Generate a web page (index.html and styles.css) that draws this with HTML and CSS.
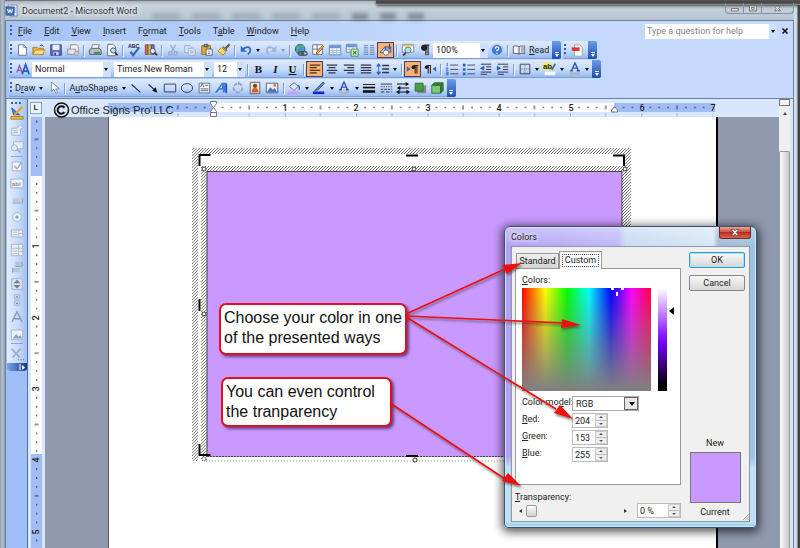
FILE: index.html
```html
<!DOCTYPE html>
<html lang="en">
<head>
<meta charset="utf-8">
<title>Document2 - Microsoft Word</title>
<link rel="stylesheet" href="styles.css">
</head>
<body>
<div class="window">
  <header class="titlebar">
    <svg class="word-icon" viewBox="0 0 14 14"><path d="M3 1h9v11H5z" fill="#fff" stroke="#6c86b8"/><path d="M9 4h2M9 6h2M9 8h2" stroke="#7a94c8"/><rect x="1" y="3" width="8" height="8" fill="#4a78c8" stroke="#2a4f9c"/><path d="M2.500 5l1.200 4L5 5.500 6.300 9l1.200-4" fill="none" stroke="#fff"/></svg>
    <h1>Document2 - Microsoft Word</h1>
    <div class="ghost" aria-hidden="true"><i></i><i></i><i></i><i></i><i></i><i></i><i></i><i></i></div>
    <div class="behind"></div>
    <div class="caption-buttons">
      <button aria-label="Minimize"><svg viewBox="0 0 18 12"><rect x="5.500" y="6.500" width="8" height="3" fill="#eee" stroke="#666"/></svg></button>
      <button aria-label="Restore"><svg viewBox="0 0 18 12"><rect x="5.500" y="3.500" width="8" height="6" fill="#eee" stroke="#666"/><rect x="8" y="5.500" width="3" height="2" fill="none" stroke="#666"/></svg></button>
      <button class="wide" aria-label="Close"><svg viewBox="0 0 30 12"><path d="M11.500 3.500h2l1.500 1.500 1.500-1.500h2l-2 3 2 3h-2L15 8l-1.500 1.500h-2l2-3z" fill="#eee" stroke="#666"/></svg></button>
    </div>
  </header>

  <div class="app">
    <nav class="menu">
      <span class="grip"></span>
      <a href="#"><u>F</u>ile</a><a href="#"><u>E</u>dit</a><a href="#"><u>V</u>iew</a><a href="#"><u>I</u>nsert</a><a href="#">F<u>o</u>rmat</a><a href="#"><u>T</u>ools</a><a href="#">T<u>a</u>ble</a><a href="#"><u>W</u>indow</a><a href="#"><u>H</u>elp</a>
      <div class="ask"><input type="text" placeholder="Type a question for help" aria-label="Type a question for help"><button class="drop" aria-label="Show questions"></button></div>
      <button class="close-doc" aria-label="Close document"><svg viewBox="0 0 8 8"><path d="M1.500 1.500l5 5M6.500 1.500l-5 5" stroke="#111" stroke-width="1.600"/></svg></button>
    </nav>

    <div class="bars">
      <div class="bar-row">
        <div class="bar">
          <span class="grip"></span>
          <button aria-label="New"><svg viewBox="0 0 16 16"><path d="M4 2h6l3 3v9H4z" fill="#fff" stroke="#5d6f94"/><path d="M10 2v3h3" fill="none" stroke="#5d6f94"/></svg></button>
          <button aria-label="Open"><svg viewBox="0 0 16 16"><path d="M1 5h5l1 1h6v7H1z" fill="#e8b64a" stroke="#a87820"/><path d="M4 8h11l-3 5H1z" fill="#ffdf80" stroke="#b88828"/><path d="M9 3q3-2 4 1" fill="none" stroke="#333"/></svg></button>
          <button aria-label="Save"><svg viewBox="0 0 16 16"><path d="M2 2h12v12H2z" fill="#5b68c8" stroke="#333c8c"/><path d="M4 2h8v6H4z" fill="#eef2ff"/><path d="M5 10h6v4H5z" fill="#c8cce8"/><path d="M6 11h2v3H6z" fill="#333c8c"/></svg></button>
          <button aria-label="Permission"><svg viewBox="0 0 16 16"><path d="M5 2h7l2 2v6H5z" fill="#f6f6f8" stroke="#888"/><path d="M2 7h9v6H2z" fill="#e4e4ea" stroke="#888"/><circle cx="12" cy="12" r="2.500" fill="#ccc" stroke="#999"/></svg></button>
          <span class="sep"></span>
          <button aria-label="Print"><svg viewBox="0 0 16 16"><path d="M5 2h8l-2 5H4z" fill="#fff" stroke="#777"/><path d="M1.500 8L4 6h9l2 2v5H2z" fill="#b8bcc8" stroke="#555"/><path d="M7 10h7v3H7z" fill="#3a9a4a"/></svg></button>
          <button aria-label="Print preview"><svg viewBox="0 0 16 16"><path d="M3 1.500h6l3 3v10H3z" fill="#fff" stroke="#667"/><circle cx="9.500" cy="8.500" r="3" fill="#bfe0f0" stroke="#445"/><path d="M11.500 11l3 3" stroke="#333" stroke-width="2"/></svg></button>
          <span class="sep"></span>
          <button aria-label="Spelling"><svg viewBox="0 0 16 16"><text x="1" y="6" class="abc">ABC</text><path d="M4 10l3 4 7-9" fill="none" stroke="#3a66c0" stroke-width="2.400"/></svg></button>
          <button aria-label="Research"><svg viewBox="0 0 16 16"><path d="M1.500 2h3v11h-3z" fill="#d86a4a" stroke="#744"/><path d="M5 2h3v11H5z" fill="#f0c840" stroke="#875"/><path d="M8.500 2h3v11h-3z" fill="#8a70c8" stroke="#448"/><circle cx="10" cy="9" r="3" fill="#d8ecfa" stroke="#446"/><path d="M12 11l3 3" stroke="#333" stroke-width="2"/></svg></button>
          <span class="sep"></span>
          <button aria-label="Cut"><svg viewBox="0 0 16 16" fill="none" stroke="#9aa8c4" stroke-width="1.500"><path d="M5 2l5 8M11 2L6 10"/><circle cx="5" cy="12" r="2"/><circle cx="11" cy="12" r="2"/></svg></button>
          <button aria-label="Copy"><svg viewBox="0 0 16 16" fill="#dbe5f6" stroke="#9aa8c4"><path d="M2 3h6l2 2v6H2z"/><path d="M6 6h6l2 2v6H6z"/><path d="M8 9h4M8 11h4"/></svg></button>
          <button aria-label="Paste"><svg viewBox="0 0 16 16"><path d="M2 3h10v10H2z" fill="#e0a838" stroke="#8a6420"/><path d="M5 1.500h4v3H5z" fill="#888" stroke="#555"/><path d="M7 7h7v7H7z" fill="#fff" stroke="#557"/><path d="M9 10h3M9 12h3" stroke="#57a"/></svg></button>
          <button aria-label="Format painter"><svg viewBox="0 0 16 16"><path d="M14.500 1.500L9 7" stroke="#654" stroke-width="2.500"/><path d="M5 5l5 5-3 4-6-5z" fill="#f6dc58" stroke="#a88a20"/><path d="M6.500 4l5 5" stroke="#777" stroke-width="2"/></svg></button>
          <span class="sep"></span>
          <button aria-label="Undo"><svg viewBox="0 0 16 16"><path d="M4 7q8-5 9 1 0 3-3 5" fill="none" stroke="#3467c8" stroke-width="2"/><path d="M2 3v7h7z" fill="#3467c8"/></svg></button><button class="drop" aria-label="Undo list"></button>
          <button aria-label="Redo"><svg viewBox="0 0 16 16"><path d="M12 7q-8-5-9 1 0 3 3 5" fill="none" stroke="#a3b3d0" stroke-width="2"/><path d="M14 3v7H7z" fill="#a3b3d0"/></svg></button><button class="drop dim" aria-label="Redo list"></button>
          <span class="sep"></span>
          <button aria-label="Insert hyperlink"><svg viewBox="0 0 16 16"><circle cx="7" cy="7" r="5.500" fill="#4a94d0" stroke="#24589a"/><path d="M4 3q3 0 3 3-3 1-4 4Q1 6 4 3M8 2q3 0 4 4-3 0-4-4" fill="#56b058"/><rect x="5" y="10" width="6" height="4" rx="2" fill="none" stroke="#555" stroke-width="1.500"/><rect x="9" y="10" width="6" height="4" rx="2" fill="none" stroke="#555" stroke-width="1.500"/></svg></button>
          <button aria-label="Tables and borders"><svg viewBox="0 0 16 16"><path d="M2 2h11v11H2zM2 7h11M7 2v11" fill="#fff" stroke="#667"/><path d="M14.500 4L8 12l-2 1 .500-2.500L13 3z" fill="#f0b848" stroke="#96641c"/></svg></button>
          <button aria-label="Insert table"><svg viewBox="0 0 16 16"><path d="M1.500 2.500h13v11h-13z" fill="#fff" stroke="#5878b0"/><path d="M2 3h12v3H2z" fill="#6a94dc"/><path d="M5.500 6v7M10 6v7M2 8.500h12M2 11h12" stroke="#9ab0d8"/></svg></button>
          <button aria-label="Insert worksheet"><svg viewBox="0 0 16 16"><path d="M1.500 1.500h12v9h-12z" fill="#fff" stroke="#5878b0"/><path d="M2 2h11v3H2z" fill="#6a94dc"/><path d="M5 5v5M9 5v5M2 7.500h11" stroke="#9ab0d8"/><path d="M7 7h8v8H7z" fill="#e8f6e4" stroke="#3a8a3a"/><path d="M9 9l4 4M13 9l-4 4" stroke="#2d8a34" stroke-width="1.500"/></svg></button>
          <button aria-label="Columns"><svg viewBox="0 0 16 16"><path d="M2 3h5M2 5.500h5M2 8h5M2 10.500h5M2 13h5M9 3h5M9 5.500h5M9 8h5M9 10.500h5M9 13h5" stroke="#5878b0"/></svg></button>
          <button class="on" aria-label="Drawing"><svg viewBox="0 0 16 16"><path d="M1 11l6-7v7z" fill="#bcd0f4" stroke="#46568c"/><rect x="7.500" y="4.500" width="6" height="6" fill="#8ca4dc" stroke="#46568c"/><circle cx="8" cy="11" r="3" fill="#fff" stroke="#667"/><path d="M12 1v6" stroke="#555" stroke-width="1.500"/></svg></button>
          <span class="sep"></span>
          <button aria-label="Document map"><svg viewBox="0 0 16 16"><path d="M1.500 1.500h13v9h-13z" fill="#fff" stroke="#7080a8"/><path d="M2 2h12v2H2z" fill="#e8c060"/><circle cx="8" cy="8" r="3.500" fill="#aee0ec" stroke="#476"/><path d="M5.500 11l-3 3.500" stroke="#444" stroke-width="2"/></svg></button>
          <button class="glyph" aria-label="Show formatting marks"><svg viewBox="0 0 16 16"><path d="M13 2.500H7.500M9 2v12M11.500 2v12" stroke="#222" stroke-width="1.300"/><circle cx="7" cy="5.500" r="3.500" fill="#222"/></svg></button>
          <span class="combo zoom"><select aria-label="Zoom"><option>100%</option></select></span>
          <button aria-label="Help"><svg viewBox="0 0 16 16"><circle cx="8" cy="8" r="6.500" fill="#3a78dc" stroke="#b6c8e8" stroke-width="1.500"/><path d="M6 6.500q0-2 2-2t2 2q0 1-2 2v1M8 11v1.300" fill="none" stroke="#fff" stroke-width="1.500"/></svg></button>
          <span class="sep"></span>
          <button class="label"><svg viewBox="0 0 16 16"><path d="M1.500 3.500H7L8 4.500 9 3.500h5.500V12H9l-1 1-1-1H1.500z" fill="#f6f8fc" stroke="#556"/><path d="M8 4v9" stroke="#333"/><path d="M10 4h4v7h-4z" fill="#aab2c4"/></svg><span><u>R</u>ead</span></button>
          <span class="cap"></span>
        </div>
        <div class="bar">
          <span class="grip"></span>
          <button class="pdf" aria-label="Convert to PDF"><svg viewBox="0 0 16 16"><path d="M5 2h6l3 3v10H5z" fill="#fff" stroke="#999"/><path d="M2 5h9v4H2z" fill="#e03028"/></svg></button>
          <span class="cap"></span>
        </div>
      </div>

      <div class="bar-row">
        <div class="bar">
          <span class="grip"></span>
          <button class="styles" aria-label="Styles and formatting"><svg viewBox="0 0 16 16"><path d="M1 12l3-8 3 8M2 9.500h4" fill="none" stroke="#8a5ab0" stroke-width="1.500"/><path d="M7 14l4-11 4 11M8.500 10.500h5" fill="none" stroke="#2e5cb8" stroke-width="2"/></svg></button>
          <span class="combo style"><select aria-label="Style"><option>Normal</option></select></span>
          <span class="combo font"><select aria-label="Font"><option>Times New Roman</option></select></span>
          <span class="combo size"><select aria-label="Font size"><option>12</option></select></span>
          <span class="sep"></span>
          <button class="glyph" aria-label="Bold"><b>B</b></button>
          <button class="glyph" aria-label="Italic"><b><em>I</em></b></button>
          <button class="glyph" aria-label="Underline"><b><u>U</u></b></button>
          <span class="sep"></span>
          <button class="on" aria-label="Align left"><svg viewBox="0 0 16 16"><path d="M2 3.500h12M2 6.500h8M2 9.500h12M2 12.500h8" stroke="#432" stroke-width="1.500"/></svg></button>
          <button aria-label="Center"><svg viewBox="0 0 16 16"><path d="M2 3.500h12M4 6.500h8M2 9.500h12M4 12.500h8" stroke="#334" stroke-width="1.500"/></svg></button>
          <button aria-label="Align right"><svg viewBox="0 0 16 16"><path d="M2 3.500h12M6 6.500h8M2 9.500h12M6 12.500h8" stroke="#334" stroke-width="1.500"/></svg></button>
          <button aria-label="Justify"><svg viewBox="0 0 16 16"><path d="M2 3.500h12M2 6.500h12M2 9.500h12M2 12.500h12" stroke="#334" stroke-width="1.500"/></svg></button>
          <button aria-label="Line spacing"><svg viewBox="0 0 16 16"><path d="M7 4h8M7 8h8M7 12h8" stroke="#334" stroke-width="1.500"/><path d="M3 3v10" stroke="#3060c0"/><path d="M0 5l3-4 3 4zM0 11l3 4 3-4z" fill="#3060c0"/></svg></button><button class="drop" aria-label="Line spacing list"></button>
          <span class="sep"></span>
          <button class="on" aria-label="Left to right"><svg viewBox="0 0 16 16"><path d="M1 5v6l4-3z" fill="#3060c0"/><path d="M14 4H9M10.500 4v9M12.500 4v9" fill="none" stroke="#222" stroke-width="1.200"/><circle cx="8.500" cy="6" r="2.200" fill="#222"/></svg></button>
          <button aria-label="Right to left"><svg viewBox="0 0 16 16"><path d="M15 5v6l-4-3z" fill="#3060c0"/><path d="M9 4H4M6 4v9M8.500 4v9" fill="none" stroke="#222" stroke-width="1.200"/><circle cx="4" cy="6" r="2" fill="#222"/></svg></button>
          <span class="sep"></span>
          <button aria-label="Numbering"><svg viewBox="0 0 16 16"><path d="M2.500 1v4M1 7h2.500L1.500 9.500H4M1 11.500h2.500v3H1M1 13h2" fill="none" stroke="#3060c0"/><path d="M6 3.500h9M6 8.500h9M6 13.500h9" stroke="#445"/></svg></button>
          <button aria-label="Bullets"><svg viewBox="0 0 16 16"><path d="M1 2h3v3H1zM1 7h3v3H1zM1 12h3v3H1z" fill="#3060c0"/><path d="M6 3.500h9M6 8.500h9M6 13.500h9" stroke="#445"/></svg></button>
          <button aria-label="Decrease indent"><svg viewBox="0 0 16 16"><path d="M2 2.500h12M8 5.500h6M8 8.500h6M2 11.500h12M2 14h7" stroke="#223"/><path d="M6 4v6L1 7z" fill="#3060c0"/></svg></button>
          <button aria-label="Increase indent"><svg viewBox="0 0 16 16"><path d="M2 2.500h12M8 5.500h6M8 8.500h6M2 11.500h12M2 14h7" stroke="#223"/><path d="M1 4v6l5-3z" fill="#3060c0"/></svg></button>
          <span class="sep"></span>
          <button aria-label="Borders"><svg viewBox="0 0 16 16"><path d="M2.500 2.500h11v11h-11z" fill="none" stroke="#334"/><path d="M8 3v10M3 8h10" stroke="#667" stroke-dasharray="1 1"/></svg></button><button class="drop" aria-label="Borders list"></button>
          <button aria-label="Highlight"><svg viewBox="0 0 16 16"><path d="M0 1h9v8H0z" fill="#f4ee50"/><text x="0" y="8" class="ab">ab</text><path d="M14 2l-4 7" stroke="#567" stroke-width="2"/><path d="M2 11h12v4H2z" fill="#fff"/></svg></button><button class="drop" aria-label="Highlight list"></button>
          <button aria-label="Font color"><svg viewBox="0 0 16 16"><path d="M4 10l4-9 4 9M5 7h6M2.500 10h3M10 10h3.500" fill="none" stroke="#3458a8" stroke-width="1.500"/><path d="M2 12h12v3H2z" fill="#b0b4c0"/></svg></button><button class="drop" aria-label="Font color list"></button>
          <span class="cap"></span>
        </div>
      </div>

      <div class="bar-row">
        <div class="bar">
          <span class="grip"></span>
          <button class="label"><span>D<u>r</u>aw</span></button><button class="drop" aria-label="Draw menu"></button>
          <button aria-label="Select objects"><svg viewBox="0 0 16 16"><path d="M5 1v11l3-2.500L10 14l2-1-2-4h4z" fill="#fff" stroke="#7888a8"/></svg></button>
          <span class="sep"></span>
          <button class="label"><span>A<u>u</u>toShapes</span></button><button class="drop" aria-label="AutoShapes menu"></button>
          <button aria-label="Line"><svg viewBox="0 0 16 16"><path d="M3 4l10 9" stroke="#223" stroke-width="1.200"/></svg></button>
          <button aria-label="Arrow"><svg viewBox="0 0 16 16"><path d="M3 4l8 7" stroke="#223" stroke-width="1.200"/><path d="M13 13.500L7 11l4-4z" fill="#111"/></svg></button>
          <button aria-label="Rectangle"><svg viewBox="0 0 16 16"><path d="M1.500 3.500h13v9h-13z" fill="none" stroke="#334"/></svg></button>
          <button aria-label="Oval"><svg viewBox="0 0 16 16"><ellipse cx="8" cy="8" rx="6.500" ry="5" fill="none" stroke="#334"/></svg></button>
          <button aria-label="Text box"><svg viewBox="0 0 16 16"><path d="M2.500 2.500h12v11h-12z" fill="#f6f8fd" stroke="#667"/><path d="M4 7l2-4 2 4M9 5h4M4 9h9M4 11h9" fill="none" stroke="#557"/></svg></button>
          <button aria-label="WordArt"><svg viewBox="0 0 16 16"><path d="M1 13L9 2h4v11h-3v-3H6l-2 3z" fill="#3f7fd8"/><path d="M9 5L7 8h2z" fill="#fff"/><path d="M13 2l2 1v11l-2-1" fill="#24509c"/></svg></button>
          <button aria-label="Diagram"><svg viewBox="0 0 16 16"><circle cx="8" cy="8" r="5" fill="none" stroke="#94a2bc" stroke-width="2" stroke-dasharray="4 2"/><path d="M8 0v5l3-2.500z" fill="#94a2bc"/></svg></button>
          <button aria-label="Clip art"><svg viewBox="0 0 16 16"><path d="M2.500 1.500h11v13h-11z" fill="#f4e8c8" stroke="#556"/><circle cx="8" cy="5.500" r="2.500" fill="#7a4a24"/><path d="M4 13q0-5 4-5t4 5z" fill="#d85c34"/></svg></button>
          <button aria-label="Picture"><svg viewBox="0 0 16 16"><path d="M1.500 2.500h13v11h-13z" fill="#e8f2fc" stroke="#557"/><path d="M2 13l4-6 3 3 2-2 3 5z" fill="#4a78b0"/><circle cx="11" cy="5" r="1.500" fill="#d86a30"/></svg></button>
          <span class="sep"></span>
          <button aria-label="Fill color"><svg viewBox="0 0 16 16"><path d="M3 6l5-4 5 4-5 5z" fill="#e4ecf8" stroke="#44608c"/><path d="M12 5q3 1 2 5" fill="none" stroke="#3468b8" stroke-width="1.500"/><path d="M1 12h13v3H1z" fill="#c99aff"/></svg></button><button class="drop" aria-label="Fill colors"></button>
          <button aria-label="Line color"><svg viewBox="0 0 16 16"><path d="M13 1L6 8l-3 3 4-1 7-7z" fill="#5a90d8" stroke="#345"/><path d="M1 12h13v3H1z" fill="#1020e0"/></svg></button><button class="drop" aria-label="Line colors"></button>
          <button aria-label="Text color"><svg viewBox="0 0 16 16"><path d="M4 10l4-9 4 9M5 7h6M2.500 10h3M10 10h3.500" fill="none" stroke="#3458a8" stroke-width="1.500"/><path d="M2 12h12v3H2z" fill="#b0b4c0"/></svg></button><button class="drop" aria-label="Text colors"></button>
          <button aria-label="Line style"><svg viewBox="0 0 16 16"><path d="M1 4h14" stroke="#111"/><path d="M1 7.500h14" stroke="#111" stroke-width="2"/><path d="M1 12h14" stroke="#111" stroke-width="3"/></svg></button>
          <button aria-label="Dash style"><svg viewBox="0 0 16 16" stroke="#223"><path d="M2 3.500h13"/><path d="M2 6.500h13" stroke-dasharray="1 1"/><path d="M2 9.500h13" stroke-dasharray="3 1"/><path d="M2 12.500h13" stroke-dasharray="4 2"/></svg></button>
          <button aria-label="Arrow style"><svg viewBox="0 0 16 16"><path d="M1 3.500h12M3 8h12M2 12.500h12" stroke="#111" stroke-width="1.200"/><path d="M11 1l4 2.500L11 6zM5 5.500L1 8l4 2.500zM12 10l4 2.500-4 2.500zM4 10L0 12.500 4 15z" fill="#111"/></svg></button>
          <button aria-label="Shadow style"><svg viewBox="0 0 16 16"><path d="M5 5h10v9H5z" fill="#888"/><path d="M2.500 2.500h9v9h-9z" fill="#44a044" stroke="#2c6c30"/></svg></button>
          <button aria-label="3-D style"><svg viewBox="0 0 16 16"><path d="M2 5l3-3h10v9l-3 3" fill="#2f7a36" stroke="#2c6c30"/><path d="M2 5h10v9H2z" fill="#7cc878" stroke="#2c6c30"/></svg></button>
          <span class="cap"></span>
        </div>
      </div>
    </div>

    <div class="workspace">
      <aside class="side">
        <div class="toolbox">
          <span class="grip flat"></span>
          <button aria-label="Design mode"><svg viewBox="0 0 16 16"><path d="M2 2l2 8h7z" fill="#3a80e0" stroke="#2454a0"/><path d="M14 1L5 10" stroke="#f0a020" stroke-width="2.500"/><path d="M1 12h14v3H1z" fill="#f0c040" stroke="#a07818"/></svg></button>
          <button aria-label="Properties"><svg viewBox="0 0 16 16" fill="#e6ecf6" stroke="#a0aec6"><path d="M2 6h10v8H2z"/><path d="M7 6l5-4 3 3-4 3M4 9h5M4 11h5"/></svg></button>
          <button aria-label="View code"><svg viewBox="0 0 16 16" fill="#e6ecf6" stroke="#a0aec6"><path d="M4 2h11v8H4z"/><circle cx="5" cy="9" r="3.500"/><path d="M8 11l4 3" stroke-width="2"/></svg></button>
          <span class="rule"></span>
          <button aria-label="Check box"><svg viewBox="0 0 16 16" fill="#f2f5fa" stroke="#9aa8c0"><path d="M2.500 3.500h11v10h-11z"/><path d="M5 8l3 3 5-7" fill="none" stroke-width="1.500"/></svg></button>
          <button aria-label="Text box control"><svg viewBox="0 0 16 16"><path d="M1 3.500h14v10H1z" fill="#f2f5fa" stroke="#9aa8c0"/><text x="2" y="11" class="abi">abl</text></svg></button>
          <button aria-label="Command button"><svg viewBox="0 0 16 16"><path d="M3 6h11v5H3z" fill="#c0cad8"/><path d="M3 11.500h11.500V6" fill="none" stroke="#909eb8"/></svg></button>
          <button aria-label="Option button"><svg viewBox="0 0 16 16"><circle cx="8" cy="8" r="5" fill="#eef2f8" stroke="#a0aec6"/><circle cx="8" cy="8" r="2" fill="#93a1ba"/></svg></button>
          <button aria-label="List box"><svg viewBox="0 0 16 16" fill="#eef2f8" stroke="#a0aec6"><path d="M1.500 4.500h13v8h-13zM10 5v7M3 7h5M3 10h5M10 8.500h4"/></svg></button>
          <button aria-label="Combo box"><svg viewBox="0 0 16 16" fill="#eef2f8" stroke="#a0aec6"><path d="M1.500 1.500h13v13h-13zM9.500 2v12M2 6h12M3 9h5M3 12h5M11 10h3"/></svg></button>
          <button aria-label="Toggle button"><svg viewBox="0 0 16 16"><path d="M6 2h8v5H6zM3 9h8v5H3z" fill="#b8c4d6"/><path d="M6 7.500h8V2M3 9v5.500" fill="none" stroke="#8d9bb4"/></svg></button>
          <button aria-label="Spin button"><svg viewBox="0 0 16 16"><path d="M2 2h12v12H2z" fill="#dbe2ee" stroke="#a0aec6"/><path d="M4 7l4-4 4 4zM4 9l4 4 4-4z" fill="#6d7d9c"/></svg></button>
          <button aria-label="Scroll bar"><svg viewBox="0 0 16 16"><path d="M5 2h6v5H5zM5 9h6v5H5z" fill="#dbe2ee" stroke="#a0aec6"/><path d="M6 5l2-2 2 2zM6 11l2 2 2-2z" fill="#6d7d9c"/></svg></button>
          <button aria-label="Label"><svg viewBox="0 0 16 16"><path d="M2 14L8 2l6 12M4.500 10h7" fill="none" stroke="#8998b4" stroke-width="1.500"/></svg></button>
          <button aria-label="Image"><svg viewBox="0 0 16 16"><path d="M1.500 3.500h13v11h-13z" fill="#edf1f8" stroke="#a0aec6"/><path d="M3 13l4-5 3 3 2-2 2 4z" fill="#94a3bd"/></svg></button>
          <span class="rule"></span>
          <button aria-label="More controls"><svg viewBox="0 0 16 16"><path d="M2 2l9 10M12 2L3 12" stroke="#9dabc4" stroke-width="2"/><path d="M9 14.500h1M12 14.500h1M15 14.500h1" stroke="#446"/></svg></button>
          <span class="side-cap"><svg viewBox="0 0 6 6"><path d="M1 0v6" stroke="#fff"/><path d="M3 1v5l3-2.500z" fill="#fff"/></svg></span>
        </div>
      </aside>

      <main class="editor">
        <div class="top-ruler">
          <button class="tab-stop" aria-label="Tab stop">L</button>
          <svg class="h-ruler" aria-hidden="true">
            <defs>
              <pattern id="ht" patternUnits="userSpaceOnUse" x="213.500" y="100" width="71.300" height="17">
                <path d="M8.400 7.500h1.200M17.300 7.500h1.200M26.200 7.500h1.200M44 7.500h1.200M52.900 7.500h1.200M61.800 7.500h1.200" stroke="#333" stroke-width="1.300"/>
                <path d="M35.700 5.500v4" stroke="#333"/><path d="M35.700 13.500v3M.500 13.500v3" stroke="#9aaccc"/>
              </pattern>
            </defs>
            <g transform="translate(-45 -100)">
              <rect x="108" y="103" width="607" height="9" fill="#a0bdf6"/>
              <rect x="213" y="103" width="401" height="9" fill="#fff"/>
              <rect x="108" y="100" width="605" height="17" fill="url(#ht)"/>
              <g class="numbers"><text x="285" y="111">1</text><text x="356" y="111">2</text><text x="428" y="111">3</text><text x="499" y="111">4</text><text x="571" y="111">5</text><text x="642" y="111">6</text><text x="713" y="111">7</text></g>
              <path d="M210.500 101.500h6v2l-3 4-3-4zM210.500 111.500l3-4 3 4v5h-6zM210.500 112.500h6M611.500 112v-2l3-3 3 3v2z" fill="#fff" stroke="#777"/>
            </g>
          </svg>
          <div class="watermark"><svg viewBox="0 0 16 16"><circle cx="8" cy="8" r="7" fill="none" stroke="#111" stroke-width="1.500"/><path d="M11 5.800a3.800 3.800 0 100 4.400" fill="none" stroke="#111" stroke-width="2"/></svg>Office Signs Pro LLC</div>
        </div>

        <div class="left-ruler">
          <svg class="v-ruler" aria-hidden="true">
            <defs>
              <pattern id="vt" patternUnits="userSpaceOnUse" x="31" y="175" width="11" height="71.300">
                <path d="M5 8.900h1.300M5 17.800h1.300M5 26.700h1.300M5 44.500h1.300M5 53.400h1.300M5 62.300h1.300" stroke="#333" stroke-width="1.300"/><path d="M3.500 35.600h4" stroke="#333"/>
              </pattern>
            </defs>
            <g transform="translate(-31 -117)">
              <rect x="31" y="117" width="11" height="2000" fill="#a0bdf6"/>
              <rect x="31" y="176" width="11" height="278" fill="#fff"/>
              <rect x="31" y="119" width="11" height="2000" fill="url(#vt)"/>
              <g class="numbers"><text transform="translate(39 246) rotate(-90)">1</text><text transform="translate(39 318) rotate(-90)">2</text><text transform="translate(39 389) rotate(-90)">3</text><text transform="translate(39 460) rotate(-90)">4</text><text transform="translate(39 532) rotate(-90)">5</text></g>
            </g>
          </svg>
        </div>

        <div class="desk">
          <div class="page">
            <svg class="drawing" viewBox="192 148 446 320" aria-hidden="true">
              <defs>
                <pattern id="hatch" patternUnits="userSpaceOnUse" width="3" height="3"><path d="M-1 1L1-1M0 3L3 0M2 4L4 2" stroke="#555" stroke-width=".8"/></pattern>
              </defs>
              <path d="M192 148h439v313H192zM198 154v307h427V154z" fill="url(#hatch)" fill-rule="evenodd"/>
              <path d="M201 166h426v295H201zM207 172v289h415V172z" fill="url(#hatch)" fill-rule="evenodd"/>
              <rect x="207" y="457" width="431" height="8" fill="#fff"/>
              <rect x="207" y="172" width="415" height="285" fill="#c999ff"/>
              <path d="M207 457V171.500h415V457" fill="none" stroke="#444"/>
              <path d="M207 456.500h415" stroke="#444" stroke-dasharray="2 1"/><path d="M206 461h420" stroke="#999" stroke-dasharray="1 2"/>
              <path d="M199.500 166v-11h11M406 155.500h12M613 155.500h11V166M199.500 299v12M199.500 444v11h11M406 456h12" fill="none" stroke="#000" stroke-width="2"/>
              <g fill="#fff" stroke="#333"><circle cx="204" cy="169" r="2"/><circle cx="414" cy="169" r="2"/><circle cx="625" cy="169" r="2"/><circle cx="204" cy="314" r="2"/><circle cx="204" cy="459" r="2" stroke-dasharray="1 1"/><circle cx="415" cy="460" r="2"/></g>
            </svg>
            <p class="callout first">Choose your color in one<br>of the presented ways</p>
            <p class="callout second">You can even control<br>the tranparency</p>
          </div>
        </div>

        <div class="scroll">
          <span class="split"></span><button class="up" aria-label="Scroll up"></button><span class="thumb"></span>
        </div>
      </main>
    </div>
  </div>
</div>

<section class="dialog" role="dialog" aria-labelledby="dlg">
  <header><h2 id="dlg">Colors</h2><button aria-label="Close dialog"><svg viewBox="0 0 30 12"><path d="M10.500 2.500h3l1.500 1.500 1.500-1.500h3l-3 3.500 3 3.500h-3L15 8l-1.500 1.500h-3l3-3.500z" fill="#fff" stroke="#643"/></svg></button></header>
  <form class="content">
    <div class="main">
      <div class="tabs"><button type="button">Standard</button><button type="button" class="active"><span>Custom</span></button></div>
      <div class="panel">
        <div class="caption"><u>C</u>olors:</div>
        <div class="pickers">
          <div class="spectrum"><svg viewBox="0 0 26 8"><path d="M0 0h3v2H0zM10 0h3v2h-3zM5 4h2v4H5z" fill="#fff"/></svg></div>
          <div class="luminance"></div>
          <span class="pointer"></span>
        </div>
        <div class="field"><label for="model">Color mo<u>d</u>el:</label><span class="combo model"><select id="model"><option>RGB</option></select></span></div>
        <div class="field"><label for="r"><u>R</u>ed:</label><span class="spin"><input id="r" type="text" value="204"><i></i></span></div>
        <div class="field"><label for="g"><u>G</u>reen:</label><span class="spin"><input id="g" type="text" value="153"><i></i></span></div>
        <div class="field"><label for="b"><u>B</u>lue:</label><span class="spin"><input id="b" type="text" value="255"><i></i></span></div>
      </div>
      <label class="caption trans" for="t"><u>T</u>ransparency:</label>
      <div class="slide"><span class="left"></span><input id="t" type="range" min="0" max="100" value="0"><span class="right"></span><span class="spin wide"><input type="text" value="0 %" aria-label="Transparency percent"><i></i></span></div>
    </div>
    <div class="actions">
      <button type="button" class="default">OK</button>
      <button type="button">Cancel</button>
      <div class="preview"><span>New</span><div class="swatch"></div><span>Current</span></div>
    </div>
  </form>
  <svg class="resize" viewBox="0 0 10 10"><path d="M1 9l8-8M4 9l5-5M7 9l2-2" stroke="#999"/></svg>
</section>

<svg class="arrows" viewBox="0 0 800 548" aria-hidden="true">
  <defs><filter id="soft" x="-10%" y="-10%" width="120%" height="120%"><feDropShadow dx="1" dy="2" stdDeviation="1" flood-color="#333" flood-opacity=".6"/></filter></defs>
  <g stroke="#ec1010" stroke-width="1.700" fill="#f01010" filter="url(#soft)">
    <path d="M406 314L505 269M406 316l157 7M406 317l150 92M390 403l115 76" fill="none"/>
    <g stroke="none"><path d="M522 263l-15 11-5-9zM581 325l-20 3 1-9zM573 419l-19-6 6-8zM521 486l-19-5 6-8z"/></g>
  </g>
</svg>
</body>
</html>
```
FILE: styles.css
```css
* { box-sizing: border-box; }
body { margin: 0; font-family: Roboto, "Open Sans", sans-serif; font-size: 9px; line-height: 12px; color: #222; position: relative; overflow: hidden; }
button, input, select { font: inherit; color: inherit; margin: 0; padding: 0; border: 0; background: none; border-radius: 0; outline: 0; }
h1, h2, p { margin: 0; font-weight: 400; }
svg { display: block; }
a { color: inherit; text-decoration: none; }

.window { min-height: 100vh; display: flex; flex-direction: column; padding: 0 6px 0 5px; background: linear-gradient(to right, #8797a8 0, #b8c4d0 2px, #8c9aaa 5px, transparent 5px, transparent calc(100% - 7px), #dce9f4 calc(100% - 7px), #c4d4e4 calc(100% - 3px), #444 calc(100% - 2px)), #c6d2dc; }
.titlebar { height: 20px; display: flex; align-items: center; position: relative; gap: 3px; background: linear-gradient(#a8b4c0, #c8d2da 4px, #b7c5d3); border-top: 1px solid #777; }
.word-icon { width: 14px; height: 14px; }
h1 { font-size: 9px; color: #333; text-shadow: 0 0 4px #fff, 0 0 6px #fff; }
.ghost { display: flex; gap: 12px; align-self: flex-end; margin-left: 12px; filter: blur(2px); opacity: .4; }
.ghost i { width: 28px; height: 7px; background: #7c8c9a; }
.ghost i:nth-child(n+6) { width: 16px; background: #334; }
.behind { position: absolute; left: 371px; right: -6px; top: -1px; height: 5px; background: linear-gradient(#555, #444 3px, #999); box-shadow: 0 1px 3px #444; border-radius: 0 0 0 2px; }
.caption-buttons { position: absolute; right: 0; top: 2px; display: flex; border: 1px solid #8391a0; border-top: 0; border-radius: 0 0 4px 4px; }
.caption-buttons button { width: 18px; height: 10px; border-right: 1px solid #8391a0; }
.caption-buttons .wide { width: 31px; border: 0; }
.caption-buttons svg { width: 100%; height: 10px; }

.app { flex: 1; display: flex; flex-direction: column; border: 1px solid #6e7e94; border-bottom: 0; background: linear-gradient(to right, #a6c3f8, #c4d9fb 55%); }
.menu { height: 20px; display: flex; align-items: center; padding: 0 2px 0 4px; gap: 12px; }
.menu .grip { margin-right: -6px; }
.grip { width: 2px; height: 12px; margin: 0 1px 0 0; background: repeating-linear-gradient(#3b5f9c 0 2px, transparent 2px 4px); flex: none; }
.ask { margin-left: auto; display: flex; height: 15px; width: 132px; background: #fff; }
.ask input { flex: 1; min-width: 0; padding-left: 2px; }
.ask input::placeholder { color: #888; opacity: 1; }
.ask .drop { background: #cfe0fb; }
.close-doc { width: 10px; height: 10px; margin-left: -8px; }
.close-doc svg { width: 8px; height: 8px; }

.bars { display: flex; flex-direction: column; gap: 1px; padding: 0 0 1px 3px; }
.bar-row { display: flex; gap: 2px; }
.bar { height: 18px; display: flex; align-items: center; background: linear-gradient(#dfebfe, #c3d9fb 55%, #92b5ee); border-radius: 2px; box-shadow: inset 0 -1px #7d9fd8; }
.bar > .grip { margin-left: 1px; }
.bar button { width: 17px; height: 16px; display: flex; align-items: center; justify-content: center; flex: none; }
.bar button svg { width: 14px; height: 14px; }
.bar .drop, .ask .drop { width: 8px; height: 15px; display: flex; align-items: center; justify-content: center; flex: none; }
.drop::after { content: ""; border: 2px solid transparent; border-top: 3px solid #111; border-bottom: 0; }
.drop.dim::after { border-top-color: #8a9ab8; }
.bar .on { background: #fcb26a; border: 1px solid #4a3c78; }
.bar .label { width: auto; padding: 0 2px; gap: 3px; }
.bar .glyph { font: 11px/14px "Liberation Serif", serif; color: #111; }
.bar .styles { width: 19px; }
.bar .pdf { width: 20px; }
.sep { width: 1px; height: 11px; margin: 0 2px; background: #7c9cd4; box-shadow: 1px 1px #eef4ff; flex: none; }
.cap { width: 9px; height: 18px; margin-left: 1px; flex: none; border-radius: 0 2px 2px 0; background: linear-gradient(#6c9be8, #1e50b0); display: flex; flex-direction: column; align-items: center; justify-content: flex-end; gap: 1px; padding-bottom: 2px; }
.cap::before { content: ""; width: 4px; height: 1px; background: #fff; }
.cap::after { content: ""; border: 2px solid transparent; border-top: 3px solid #fff; border-bottom: 0; }
.combo { position: relative; height: 15px; background: #fff; display: flex; flex: none; }
.combo select { appearance: none; width: 100%; padding-left: 3px; }
.combo::after { content: ""; position: absolute; right: 3px; top: 6px; border: 2px solid transparent; border-top: 3px solid #111; border-bottom: 0; pointer-events: none; }
.combo::before { content: ""; position: absolute; right: 0; top: 0; bottom: 0; width: 8px; background: #cfe0fb; }
.style { width: 79px; margin-right: 3px; }
.font { width: 98px; margin-right: 2px; }
.size { width: 31px; }
.zoom { width: 55px; }
.abc { font: bold 6px "Liberation Sans", sans-serif; fill: #224; }
.ab { font: bold 9px "Liberation Sans", sans-serif; fill: #222; }
.abi { font: bold 7px "Liberation Sans", sans-serif; fill: #8090ac; }

.workspace { flex: 1; display: grid; grid-template-columns: 21px minmax(0, 1fr); border-top: 1px solid #7080a0; }
.side { background: #9fbdf6; padding-left: 1px; }
.toolbox { height: 272px; display: flex; flex-direction: column; justify-content: space-between; align-items: center; background: linear-gradient(to right, #e4eefe, #c3d9fb 60%, #a0c0f2); border-radius: 0 0 3px 3px; padding-top: 3px; }
.toolbox button { width: 16px; height: 15px; }
.toolbox button svg { width: 14px; height: 14px; margin: auto; }
.grip.flat { width: 12px; height: 2px; background: repeating-linear-gradient(to right, #3b5f9c 0 2px, transparent 2px 4px); }
.rule { width: 12px; height: 1px; background: #88a6d8; }
.side-cap { align-self: stretch; height: 8px; background: linear-gradient(to right, #7aa4ec, #123c8c); border-radius: 0 0 3px 3px; padding: 1px 2px; }
.side-cap svg { width: 6px; height: 6px; margin-left: auto; }
.editor { display: grid; grid-template-columns: 17px minmax(0, 1fr) 14px; grid-template-rows: 18px 1fr; border-left: 1px solid #60708c; background: #d8e7fd; }
.top-ruler { grid-column: 1 / 3; display: flex; position: relative; padding-top: 1px; }
.tab-stop { width: 12px; height: 12px; margin: 2px 3px 0 2px; border: 1px solid #8ba2c8; background: #eef4fe; font: bold 8px/8px "Liberation Sans", sans-serif; color: #333; }
.h-ruler { flex: 1; min-width: 0; height: 17px; }
.numbers { font: 500 9px Roboto, sans-serif; fill: #222; text-anchor: middle; }
.watermark { position: absolute; left: 25px; top: 3px; display: flex; align-items: center; gap: 1px; font: 11px/16px "Liberation Sans", sans-serif; color: #222; }
.watermark svg { width: 17px; height: 16px; }
.left-ruler { padding: 0 3px; }
.v-ruler { width: 11px; height: 100%; }
.desk { background: #9099ae; padding: 0 61px 0 63px; display: flex; }
.page { flex: 1; position: relative; background: #fff; border-left: 1px solid #555; border-right: 2px solid #000; }
.drawing { position: absolute; left: 83px; top: 31px; width: 446px; height: 320px; }
.callout { position: absolute; font: 16px/20px "Liberation Sans", sans-serif; color: #111; background: #fff; border: 2px solid #e01020; border-radius: 7px; box-shadow: 2px 2px 3px rgba(40, 0, 60, .6); white-space: nowrap; padding: 3px; }
.first { left: 110px; top: 186px; width: 188px; height: 52px; }
.second { left: 112px; top: 260px; width: 171px; height: 50px; }
.scroll { grid-column: 3; grid-row: 1 / 3; margin-right: 3px; background: #eeeff1; display: flex; flex-direction: column; align-items: stretch; }
.split { height: 7px; border: 1px solid #777; background: #f4f4f4; }
.up { height: 45px; display: flex; justify-content: center; align-items: flex-start; padding-top: 6px; }
.up::after { content: ""; border: 2px solid transparent; border-bottom: 3px solid #444; border-top: 0; }
.thumb { flex: 1; border: 1px solid #999; border-bottom: 0; border-radius: 2px 2px 0 0; background: linear-gradient(to right, #fafafa, #c9cbd2); }

.dialog { position: absolute; left: 504px; top: 226px; width: 253px; height: 302px; padding: 0 6px 6px; display: flex; flex-direction: column; border: 1px solid #44506c; border-radius: 6px 6px 4px 4px; background: linear-gradient(rgba(255,255,255,.35), transparent 20px), linear-gradient(transparent 230px, #bfe0f2 240px), linear-gradient(to right, #b3a0f4 0, #bdb6f8 45%, #c6daf2 48%, #d6e6f6 83%, #a4b8d4 85%, #9cc4e0); box-shadow: inset 0 0 0 1px rgba(210,240,255,.8), inset 0 -3px 2px #9ed2ee, 0 2px 10px 2px rgba(0, 0, 0, .65); }
.dialog header { height: 19px; display: flex; align-items: center; justify-content: space-between; flex: none; }
h2 { font-size: 9px; line-height: 18px; text-shadow: 0 0 5px #fff, 0 0 5px #fff; }
.dialog header button { width: 32px; height: 12px; align-self: flex-start; margin-right: -1px; border: 1px solid #6c2a2a; border-top: 0; border-radius: 0 0 3px 3px; background: linear-gradient(#e8a89c, #cf5040 45%, #b82c20 50%, #d86850); }
.dialog header svg { width: 30px; height: 11px; }
.content { flex: 1; display: flex; background: #f0f0f0; border: 1px solid #8e98aa; padding: 4px 4px 3px 3px; gap: 8px; }
.main { flex: 1; min-width: 0; display: flex; flex-direction: column; }
.tabs { display: flex; padding-left: 1px; height: 17px; align-items: flex-end; }
.tabs button { height: 15px; width: 43px; border: 1px solid #999; border-bottom: 0; background: linear-gradient(#f0f0f0, #d4d4d4); }
.tabs .active { height: 18px; background: #fff; position: relative; margin-bottom: -1px; display: flex; align-items: center; justify-content: center; }
.tabs span { border: 1px dotted #555; padding: 0 2px; line-height: 11px; }
.panel { height: 217px; border: 1px solid #999; background: #fff; padding: 5px 6px 0; }
.pickers { display: flex; height: 103px; margin: 2px 0 5px; gap: 7px; }
.spectrum { flex: 0 0 129px; background: linear-gradient(rgba(128,128,128,0), #808080), linear-gradient(to right, #f00, #ff0 18%, #0f0 35%, #0ff 52%, #00f 69%, #f0f 85%, #f04); }
.spectrum svg { width: 26px; height: 8px; margin-left: 89px; }
.luminance { flex: 0 0 9px; background: linear-gradient(#fff, #8c1aff 45%, #7000ee 55%, #000 95%); }
.pointer { align-self: flex-start; margin: 19px 0 0 -5px; border: 4px solid transparent; border-right: 5px solid #000; border-left: 0; }
.field { display: flex; height: 15px; margin-bottom: 2px; }
.field label { width: 50px; flex: none; white-space: nowrap; }
.model { width: 67px; border: 1px solid #aaa; }
.model::before { width: 12px; background: #e8e8e8; border: 1px solid #666; }
.model::after { right: 3px; top: 5px; border-width: 3px; border-top-width: 4px; border-bottom: 0; }
.spin { display: flex; width: 36px; height: 15px; border: 1px solid #bbb; background: #fff; flex: none; }
.spin input { flex: 1; min-width: 0; padding-left: 2px; line-height: 12px; }
.spin i { width: 12px; flex: none; border: 1px solid #ccc; background: linear-gradient(#eee 5px, #bbb 5px 6px, #eee 6px); display: flex; flex-direction: column; align-items: center; justify-content: space-between; padding: 1px 0; }
.spin i::before, .spin i::after { content: ""; border: 2px solid transparent; }
.spin i::before { border-bottom-color: #44588c; border-top: 0; }
.spin i::after { border-top-color: #44588c; border-bottom: 0; }
.trans { margin-top: 6px; }
.slide { display: flex; align-items: center; height: 15px; }
.slide > input { flex: 1; min-width: 0; height: 13px; appearance: none; }
.slide > input::-webkit-slider-thumb { appearance: none; width: 11px; height: 12px; border: 1px solid #999; border-radius: 2px; background: linear-gradient(#fafafa, #d2d2d2); }
.left, .right { border: 2px solid transparent; margin: 0 4px; }
.left { border-right: 3px solid #333; border-left: 0; }
.right { border-left: 3px solid #333; border-right: 0; margin-right: 10px; }
.spin.wide { width: 44px; }
.actions { width: 56px; flex: none; display: flex; flex-direction: column; gap: 7px; padding-top: 1px; }
.actions button { height: 16px; border: 1px solid #888; border-radius: 2px; background: linear-gradient(#f6f6f6, #e8e8e8 50%, #d6d6d6); line-height: 12px; }
.actions .default { border-color: #3a9cc4; box-shadow: inset 0 0 0 1px #a8e0f4; }
.preview { margin-top: auto; display: flex; flex-direction: column; align-items: center; gap: 3px; margin-right: 4px; }
.swatch { width: 51px; height: 51px; background: #c999ff; border: 1px solid #777; }
.resize { position: absolute; right: 6px; bottom: 6px; width: 8px; height: 8px; }
.arrows { position: absolute; left: 0; top: 0; width: 800px; height: 548px; pointer-events: none; }
```
